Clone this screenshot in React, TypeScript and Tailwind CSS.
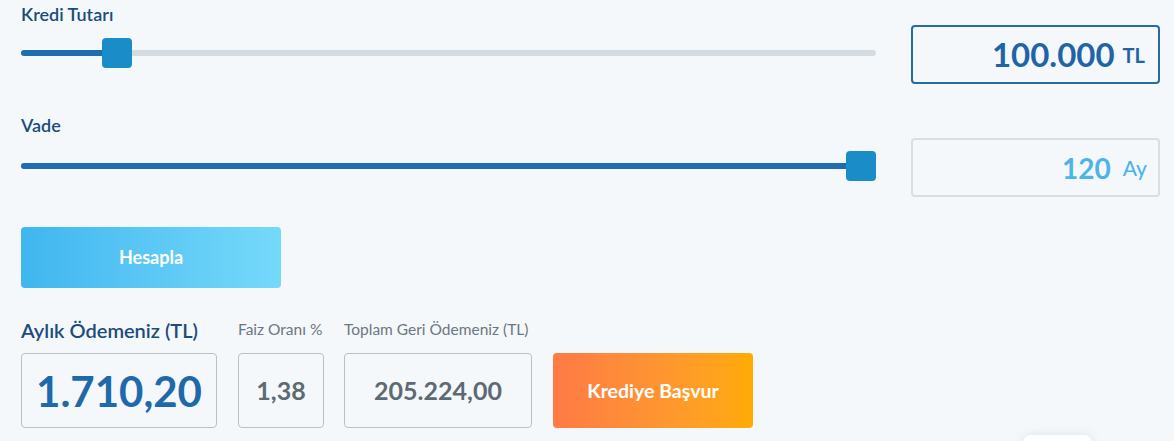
import React from "react";

function Slider({ pct }: { pct: number }) {
  const thumbLeft = pct * (855 - 30);
  return (
    <div className="relative h-[30px] w-[855px]">
      <div className="absolute left-0 right-0 top-[12px] h-[6px] rounded-full bg-[#d4dce1]" />
      <div
        className="absolute left-0 top-[12px] h-[6px] rounded-l-full bg-[#1f6db0]"
        style={{ width: thumbLeft + 4 }}
      />
      <div
        className="absolute top-0 h-[30px] w-[30px] rounded-[4px] bg-[#1a8dc8]"
        style={{ left: thumbLeft }}
      />
    </div>
  );
}

export default function App() {
  return (
    <div
      className="relative h-[441px] w-[1174px] overflow-hidden bg-[#f4f8fb] pl-[21px]"
      style={{ fontFamily: "Lato, 'Noto Sans', sans-serif" }}
    >
      {/* Row 1 */}
      <div className="flex h-[84px] items-start gap-[35px]">
        <div className="flex flex-col pt-[3px]">
          <div className="text-[18px] font-semibold leading-[23px] text-[#1c4c7c]">Kredi Tutarı</div>
          <div className="mt-[12px]">
            <Slider pct={81 / 825} />
          </div>
        </div>
        <div className="mt-[25px] flex h-[59px] w-[249px] items-center justify-end rounded-[4px] border-2 border-[#2a69a4] pr-[13px]">
          <span className="text-[33px] font-bold leading-none text-[#1f64a6]">100.000</span>
          <span className="ml-[8px] text-[20px] font-bold leading-none text-[#1f64a6]">TL</span>
        </div>
      </div>

      {/* Row 2 */}
      <div className="mt-[30px] flex h-[83px] items-start gap-[35px]">
        <div className="flex flex-col">
          <div className="text-[18px] font-semibold leading-[23px] text-[#1c4c7c]">Vade</div>
          <div className="mt-[14px]">
            <Slider pct={1} />
          </div>
        </div>
        <div className="mt-[24px] flex h-[59px] w-[249px] items-center justify-end rounded-[4px] border-2 border-[#d8dee2] pr-[11px]">
          <span className="text-[28px] font-bold leading-none text-[#4db4e9]">120</span>
          <span className="ml-[12px] text-[21px] font-medium leading-none text-[#4db4e9]">Ay</span>
        </div>
      </div>

      {/* Hesapla */}
      <button className="mt-[30px] flex h-[61px] w-[260px] items-center justify-center rounded-[4px] bg-gradient-to-r from-[#3fb6ef] to-[#75d9fa] text-[18px] font-bold text-white">
        Hesapla
      </button>

      {/* Results */}
      <div className="mt-[30px] flex items-end">
        <div className="flex flex-col">
          <div className="mb-[11px] text-[20px] font-semibold leading-[24px] text-[#1c4c7c]">Aylık Ödemeniz (TL)</div>
          <div className="flex h-[75px] w-[196px] items-center justify-center rounded-[4px] border border-[#b9c1c7]">
            <span className="text-[42px] font-bold leading-none text-[#1f69aa]">1.710,20</span>
          </div>
        </div>
        <div className="ml-[21px] flex flex-col">
          <div className="mb-[14px] text-[15.5px] leading-[20px] text-[#6c7780]">Faiz Oranı %</div>
          <div className="flex h-[75px] w-[86px] items-center justify-center rounded-[4px] border border-[#b9c1c7]">
            <span className="text-[25px] font-bold leading-none text-[#5e6a73]">1,38</span>
          </div>
        </div>
        <div className="ml-[20px] flex flex-col">
          <div className="mb-[14px] text-[15.5px] leading-[20px] text-[#6c7780]">Toplam Geri Ödemeniz (TL)</div>
          <div className="flex h-[75px] w-[188px] items-center justify-center rounded-[4px] border border-[#b9c1c7]">
            <span className="text-[25px] font-bold leading-none text-[#5e6a73]">205.224,00</span>
          </div>
        </div>
        <button className="ml-[21px] flex h-[75px] w-[200px] items-center justify-center rounded-[4px] bg-gradient-to-r from-[#ff7a45] to-[#ffab00] text-[19.5px] font-bold text-white">
          Krediye Başvur
        </button>
      </div>

      {/* floating card peeking at the bottom */}
      <div className="absolute left-[1023px] top-[435px] h-[30px] w-[69px] rounded-[8px] bg-white shadow-[0_0_10px_rgba(150,170,190,0.25)]" />
    </div>
  );
}
